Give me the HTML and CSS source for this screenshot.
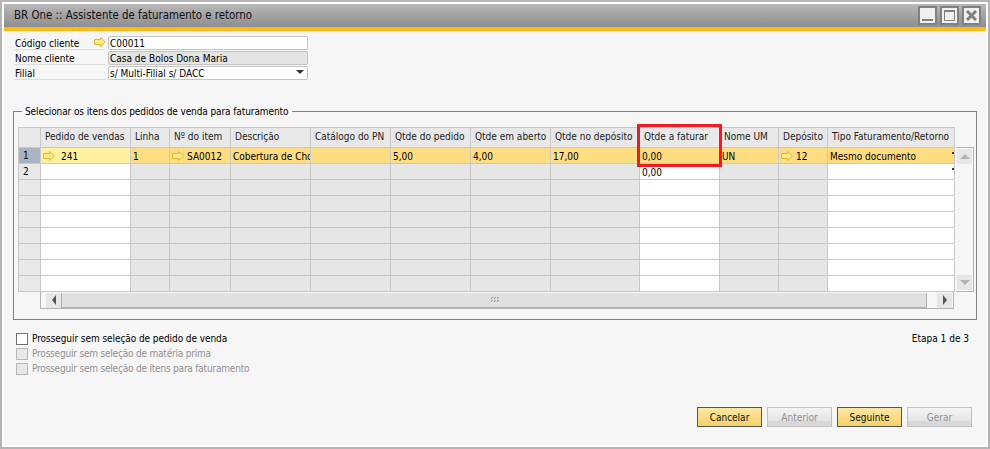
FILE: index.html
```html
<!DOCTYPE html>
<html lang="en">
<head>
  <meta charset="UTF-8">
  <title>BR One :: Assistente de faturamento e retorno</title>
  <link rel="stylesheet" href="styles.css">
</head>
<body>
  <svg class="defs" width="0" height="0">
    <symbol id="arrow" viewBox="0 0 12 10">
      <path d="M.5 2.500h6v-2l5 4.500-5 4.500v-2h-6z" fill="#fbe88c" stroke="#e5b92e"/>
    </symbol>
  </svg>
  <div class="window">
    <div class="titlebar">
      <span class="title">BR One :: Assistente de faturamento e retorno</span>
      <div class="controls">
        <button class="ctl"><svg width="15" height="15"><path d="M2 12h11" stroke="#808080" stroke-width="2"/></svg></button>
        <button class="ctl"><svg width="15" height="15"><path d="M2.500 2.500h10v10h-10z" fill="none" stroke="#808080"/><path d="M2 3h11" stroke="#808080" stroke-width="2"/></svg></button>
        <button class="ctl"><svg width="15" height="15"><path d="M3 3l9 9M12 3l-9 9" stroke="#808080" stroke-width="3"/></svg></button>
      </div>
    </div>
    <div class="accent"></div>
    <div class="content">
      <div class="form">
        <label class="lbl">Código cliente<svg class="arrow"><use href="#arrow"/></svg></label>
        <div class="field">C00011</div>
        <label class="lbl">Nome cliente</label>
        <div class="field readonly">Casa de Bolos Dona Maria</div>
        <label class="lbl">Filial</label>
        <div class="field select">s/ Multi-Filial s/ DACC<span class="caret"></span></div>
      </div>

      <fieldset class="group">
        <legend>Selecionar os itens dos pedidos de venda para faturamento</legend>
        <div class="matrix-wrap">
          <div class="matrix-top">
            <div class="matrix">
              <div class="th corner"></div>
              <div class="th">Pedido de vendas</div>
              <div class="th">Linha</div>
              <div class="th">Nº do item</div>
              <div class="th">Descrição</div>
              <div class="th">Catálogo do PN</div>
              <div class="th">Qtde do pedido</div>
              <div class="th">Qtde em aberto</div>
              <div class="th">Qtde no depósito</div>
              <div class="th">Qtde a faturar</div>
              <div class="th">Nome UM</div>
              <div class="th">Depósito</div>
              <div class="th">Tipo Faturamento/Retorno</div>

              <div class="rh current">1</div>
              <div class="td edit-sel"><svg class="arrow"><use href="#arrow"/></svg><span class="gap">241</span></div>
              <div class="td sel">1</div>
              <div class="td sel"><svg class="arrow"><use href="#arrow"/></svg>SA0012</div>
              <div class="td sel clip">Cobertura de Chocolate</div>
              <div class="td sel"></div>
              <div class="td sel">5,00</div>
              <div class="td sel">4,00</div>
              <div class="td sel">17,00</div>
              <div class="td sel">0,00</div>
              <div class="td sel tight">UN</div>
              <div class="td sel"><svg class="arrow"><use href="#arrow"/></svg>12</div>
              <div class="td sel">Mesmo documento<span class="tick"></span></div>

              <div class="rh">2</div><div class="td w"></div><div class="td"></div><div class="td"></div><div class="td"></div><div class="td"></div><div class="td"></div><div class="td"></div><div class="td"></div><div class="td w">0,00</div><div class="td"></div><div class="td"></div><div class="td w"><span class="tick"></span></div>
              <div class="rh"></div><div class="td w"></div><div class="td"></div><div class="td"></div><div class="td"></div><div class="td"></div><div class="td"></div><div class="td"></div><div class="td"></div><div class="td w"></div><div class="td"></div><div class="td"></div><div class="td w"></div>
              <div class="rh"></div><div class="td w"></div><div class="td"></div><div class="td"></div><div class="td"></div><div class="td"></div><div class="td"></div><div class="td"></div><div class="td"></div><div class="td w"></div><div class="td"></div><div class="td"></div><div class="td w"></div>
              <div class="rh"></div><div class="td w"></div><div class="td"></div><div class="td"></div><div class="td"></div><div class="td"></div><div class="td"></div><div class="td"></div><div class="td"></div><div class="td w"></div><div class="td"></div><div class="td"></div><div class="td w"></div>
              <div class="rh"></div><div class="td w"></div><div class="td"></div><div class="td"></div><div class="td"></div><div class="td"></div><div class="td"></div><div class="td"></div><div class="td"></div><div class="td w"></div><div class="td"></div><div class="td"></div><div class="td w"></div>
              <div class="rh"></div><div class="td w"></div><div class="td"></div><div class="td"></div><div class="td"></div><div class="td"></div><div class="td"></div><div class="td"></div><div class="td"></div><div class="td w"></div><div class="td"></div><div class="td"></div><div class="td w"></div>
              <div class="rh"></div><div class="td w"></div><div class="td"></div><div class="td"></div><div class="td"></div><div class="td"></div><div class="td"></div><div class="td"></div><div class="td"></div><div class="td w"></div><div class="td"></div><div class="td"></div><div class="td w"></div>
              <div class="rh"></div><div class="td w"></div><div class="td"></div><div class="td"></div><div class="td"></div><div class="td"></div><div class="td"></div><div class="td"></div><div class="td"></div><div class="td w"></div><div class="td"></div><div class="td"></div><div class="td w"></div>
            </div>
            <div class="vscroll">
              <div class="sbtn"><span class="tri up"></span></div>
              <div class="sbtn"><span class="tri down"></span></div>
            </div>
          </div>
          <div class="hscroll">
            <div class="sbtn"><span class="tri left"></span></div>
            <div class="thumb"><span class="grip"></span></div>
            <div class="sbtn"><span class="tri right"></span></div>
          </div>
          <div class="highlight"></div>
        </div>
      </fieldset>

      <div class="options">
        <div class="checks">
          <div class="check"><span class="box"></span>Prosseguir sem seleção de pedido de venda</div>
          <div class="check off"><span class="box"></span>Prosseguir sem seleção de matéria prima</div>
          <div class="check off"><span class="box"></span>Prosseguir sem seleção de itens para faturamento</div>
        </div>
        <div class="step">Etapa 1 de 3</div>
      </div>

      <div class="actions">
        <button class="btn primary">Cancelar</button>
        <button class="btn">Anterior</button>
        <button class="btn primary">Seguinte</button>
        <button class="btn">Gerar</button>
      </div>
    </div>
  </div>
</body>
</html>
```

FILE: styles.css
```css
* {
  box-sizing: border-box;
}
html, body {
  margin: 0;
  padding: 0;
}
body {
  width: 990px;
  height: 449px;
  overflow: hidden;
  background: #fff;
  font: 10px/13px "DejaVu Sans", "Liberation Sans", Arial, sans-serif;
  font-stretch: condensed;
  color: #000;
}
.defs {
  position: absolute;
}
.window {
  display: flex;
  flex-direction: column;
  height: 449px;
  padding: 2px;
  border: 2px solid #b4b4b4;
  background: #fff;
}
.titlebar {
  display: flex;
  align-items: center;
  justify-content: space-between;
  height: 23px;
  padding: 0 5px 0 10px;
  background: linear-gradient(#b8b8b8, #8e8e8e);
}
.title {
  font-size: 11.4px;
  color: #111;
}
.controls {
  display: flex;
  gap: 3px;
}
.ctl {
  display: block;
  width: 19px;
  height: 19px;
  padding: 0;
  border: 2px solid #808080;
  background: #f0f0f0;
}
.ctl svg {
  display: block;
}
.accent {
  height: 4px;
  background: #ffb914;
}
.content {
  flex: 1;
  display: flex;
  flex-direction: column;
  padding: 5px 9px 18px 9px;
  background: #f6f6f6;
}

/* top form */
.form {
  display: grid;
  grid-template-columns: 91px 200px;
  grid-auto-rows: 13px;
  row-gap: 2px;
  column-gap: 3px;
  margin-left: 1px;
}
.lbl {
  display: flex;
  justify-content: space-between;
  align-items: center;
  height: 14px;
  padding: 1px 0 0 1px;
  border-bottom: 1px solid #dcdcdc;
}
.lbl .arrow {
  margin: 0 -1px 3px 0;
}
.field {
  position: relative;
  height: 14px;
  padding: 1px 0 0 1px;
  border: 1px solid #c4c4c4;
  border-radius: 2px;
  background: #fff;
  line-height: 12px;
}
.readonly {
  background: #e4e4e4;
}
.caret {
  position: absolute;
  top: 3px;
  right: 3px;
  border: 4px solid transparent;
  border-top: 4px solid #333;
  border-bottom: 0;
}
.arrow {
  flex: none;
  width: 12px;
  height: 10px;
  margin-right: 3px;
  vertical-align: -1px;
}

/* group box */
.group {
  height: 215px;
  margin: 26px 0 0 0;
  padding: 9px 4px 0;
  border: 1px solid #808080;
  min-width: 0;
}
.group legend {
  margin-left: 4px;
  padding: 0 4px 0 3px;
  line-height: 13px;
  letter-spacing: -0.1px;
}
.matrix-wrap {
  position: relative;
}
.matrix-top {
  display: flex;
}
.matrix {
  display: grid;
  grid-template-columns: 22px 90px 39px 61px 80px 80px 80px 80px 89px 80px 59px 49px 127px;
  grid-template-rows: 20px repeat(9, 16px);
  border-top: 1px solid #c8c8c8;
  border-left: 1px solid #c8c8c8;
}
.th, .rh, .td {
  overflow: hidden;
  white-space: nowrap;
  border-right: 1px solid #c8c8c8;
  border-bottom: 1px solid #c8c8c8;
}
.th {
  padding: 2px 0 0 4px;
  background: #e8e8e8;
  color: #222;
}
.rh {
  padding: 1px 0 0 4px;
  background: #e8e8e8;
}
.rh.current {
  background: #aab4c0;
}
.td {
  display: flex;
  align-items: center;
  position: relative;
  padding: 1px 0 0 2px;
  background: #e6e6e6;
}
.td.w {
  background: #fff;
}
.td.sel {
  background: #fddc82;
}
.td.edit-sel {
  background: #fff0a0;
}
.td.tight {
  padding-left: 2px;
}
.gap {
  margin-left: 3px;
}
.tick {
  position: absolute;
  top: 4px;
  right: 0;
  width: 2px;
  height: 2px;
  background: #333;
}

/* scrollbars */
.vscroll {
  display: flex;
  flex-direction: column;
  justify-content: space-between;
  width: 18px;
  margin: 20px 0 0 1px;
  padding: 1px;
  border: 1px solid #b4b4b4;
  border-left: 0;
  background: #f6f6f6;
}
.sbtn {
  display: flex;
  align-items: center;
  justify-content: center;
  flex: none;
  width: 15px;
  height: 15px;
  background: #e6e6e6;
}
.hscroll {
  display: flex;
  align-items: center;
  gap: 0;
  width: 914px;
  height: 17px;
  margin-left: 22px;
  padding: 0 1px 0 5px;
  border: 1px solid #b4b4b4;
  border-top: 0;
  background: #f6f6f6;
}
.thumb {
  display: flex;
  align-items: center;
  justify-content: center;
  flex: 1;
  height: 15px;
  margin-right: 10px;
  border: 1px solid #b0b0b0;
  border-top: 0;
  background: #e0e0e0;
}
.grip {
  width: 9px;
  height: 6px;
  background: conic-gradient(#aaa 25%, transparent 0) 0 0 / 3px 3px;
}
.tri {
  width: 0;
  height: 0;
  border: 5px solid transparent;
}
.tri.up {
  border-top: 0;
  border-bottom: 5px solid #b4b4b4;
}
.tri.down {
  border-bottom: 0;
  border-top: 5px solid #b4b4b4;
}
.tri.left {
  border-left: 0;
  border-right: 4px solid #555;
}
.tri.right {
  border-right: 0;
  border-left: 4px solid #555;
}

/* red annotation drawn over the grid */
.highlight {
  position: absolute;
  top: -3px;
  left: 619px;
  width: 85px;
  height: 43px;
  border: 3px solid #ee1c25;
}

/* below the grid */
.options {
  display: flex;
  justify-content: space-between;
  margin-top: 12px;
  padding: 0 8px 0 3px;
}
.checks {
  display: flex;
  flex-direction: column;
  gap: 2px;
}
.check {
  display: flex;
  align-items: center;
  gap: 4px;
  letter-spacing: -0.07px;
}
.check.off {
  color: #909090;
  letter-spacing: -0.2px;
}
.box {
  width: 12px;
  height: 12px;
  border: 1px solid #707070;
  background: #fff;
}
.off .box {
  border-color: #b8b8b8;
  background: #e8e8e8;
}
.actions {
  display: flex;
  justify-content: flex-end;
  gap: 5px;
  margin-top: auto;
  padding-right: 5px;
}
.btn {
  width: 65px;
  height: 20px;
  padding: 0;
  border: 1px solid #c0c0c0;
  background: linear-gradient(#f4f4f4, #e4e4e4 70%, #d8d8d8 70%);
  color: #909090;
  font: inherit;
}
.btn.primary {
  border-color: #555;
  background: linear-gradient(#fbe7a6, #f6d166);
  color: #111;
}
```
